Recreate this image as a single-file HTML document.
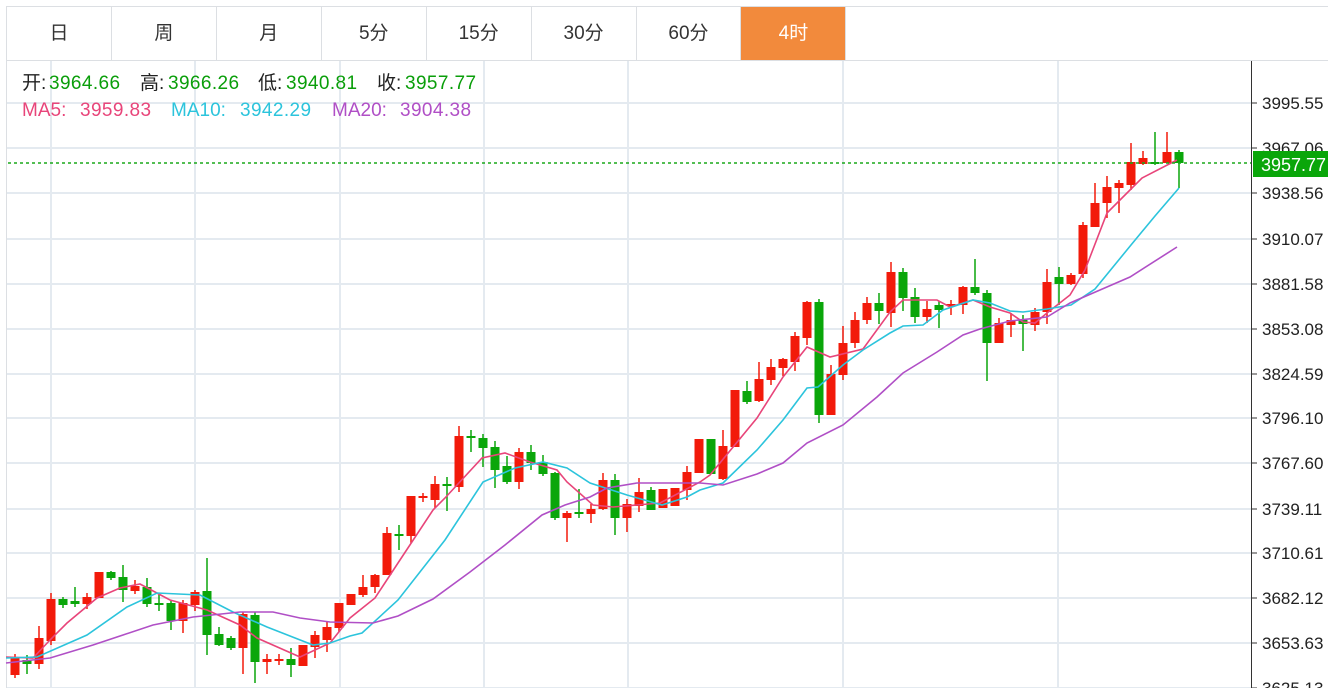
<!DOCTYPE html>
<html><head><meta charset="utf-8"><style>
*{margin:0;padding:0;box-sizing:border-box}
body{width:1328px;height:688px;overflow:hidden;background:#fff;font-family:"Liberation Sans","Noto Sans CJK SC",sans-serif;position:relative}
.tabs{position:absolute;left:6px;top:6px;height:55px;display:flex;border:1px solid #dcdfe3;border-right:none;width:1322px}
.tab{width:105px;height:53px;border-right:1px solid #dcdfe3;text-align:center;line-height:53px;font-size:19px;color:#333}
.tab.on{background:#f28a3c;color:#fff}
.i{position:absolute;font-size:19px;white-space:nowrap;line-height:22px}
.k{color:#222}.v{color:#0a9e0a}
svg{position:absolute;left:0;top:0}
</style></head><body>
<svg id="c" width="1328" height="688"></svg>
<div class="tabs"><div class="tab">日</div><div class="tab">周</div><div class="tab">月</div><div class="tab">5分</div><div class="tab">15分</div><div class="tab">30分</div><div class="tab">60分</div><div class="tab on">4时</div><div class="tab" style="border-right:none;width:482px"></div></div>
<div class="i k" style="left:22px;top:73px">开:</div><div class="i v" style="left:49px;top:73px;letter-spacing:0.4px">3964.66</div>
<div class="i k" style="left:140px;top:73px">高:</div><div class="i v" style="left:168px;top:73px;letter-spacing:0.4px">3966.26</div>
<div class="i k" style="left:258px;top:73px">低:</div><div class="i v" style="left:286px;top:73px;letter-spacing:0.4px">3940.81</div>
<div class="i k" style="left:377px;top:73px">收:</div><div class="i v" style="left:405px;top:73px;letter-spacing:0.4px">3957.77</div>
<div class="i" style="left:22px;top:100px;color:#e8457a">MA5:</div><div class="i" style="left:80px;top:100px;color:#e8457a;letter-spacing:0.4px">3959.83</div>
<div class="i" style="left:171px;top:100px;color:#2cc4dc">MA10:</div><div class="i" style="left:240px;top:100px;color:#2cc4dc;letter-spacing:0.4px">3942.29</div>
<div class="i" style="left:332px;top:100px;color:#b04fc6">MA20:</div><div class="i" style="left:400px;top:100px;color:#b04fc6;letter-spacing:0.4px">3904.38</div>
<script>
var s='';
var G='#e4eaf0';
[103,148,193,239,284,329,374,418,463,509,553,598,643,688].forEach(function(y){s+='<line x1="6" x2="1251" y1="'+y+'" y2="'+y+'" stroke="'+G+'" stroke-width="2"/>';});
[51,195,340,484,628,843,1058].forEach(function(x){s+='<line x1="'+x+'" x2="'+x+'" y1="60" y2="688" stroke="'+G+'" stroke-width="2"/>';});
s+='<line x1="6.5" x2="6.5" y1="60" y2="688" stroke="#dcdfe3"/>';
s+='<line x1="1251.5" x2="1251.5" y1="60" y2="688" stroke="#333"/>';
var labs=['3995.55','3967.06','3938.56','3910.07','3881.58','3853.08','3824.59','3796.10','3767.60','3739.11','3710.61','3682.12','3653.63','3625.13'];
[103,148,193,239,284,329,374,418,463,509,553,598,643,688].forEach(function(y,i){s+='<line x1="1251" x2="1257" y1="'+y+'" y2="'+y+'" stroke="#333"/><text x="1262" y="'+(y+6)+'" font-size="17" fill="#222" font-family="Liberation Sans,sans-serif">'+labs[i]+'</text>';});
var R='#f21a0a',Gr='#0aa60a';
var d=[[15,'r',658,675,654,678],[27,'g',660,664,655,674],[39,'r',638,664,626,669],[51,'r',599,641,593,645],[63,'g',599,605,597,608],[75,'g',601,604,587,607],[87,'r',597,604,593,609],[99,'r',572,598,572,598],[111,'g',572,578,571,580],[123,'g',577,590,565,602],[135,'r',586,591,580,594],[147,'g',587,604,578,607],[159,'g',603,605,594,611],[171,'g',603,621,601,630],[183,'r',603,621,600,633],[195,'r',592,605,590,611],[207,'g',591,635,558,655],[219,'g',634,645,627,646],[231,'g',638,648,636,650],[243,'r',614,648,612,674],[255,'g',615,662,612,683],[267,'r',659,662,654,674],[279,'r',659,661,654,665],[291,'g',659,665,648,677],[303,'r',645,666,645,666],[315,'r',635,647,631,658],[327,'r',627,640,621,652],[339,'r',603,628,603,632],[351,'r',594,605,594,605],[363,'r',587,595,575,597],[375,'r',575,587,574,593],[387,'r',533,575,527,575],[399,'g',534,536,525,550],[411,'r',496,536,496,543],[423,'r',496,498,493,502],[435,'r',484,500,476,508],[447,'g',484,486,477,511],[459,'r',436,487,426,492],[471,'g',436,438,430,452],[483,'g',438,448,434,467],[495,'g',447,470,441,488],[507,'g',466,482,456,484],[519,'r',452,482,448,489],[531,'g',452,463,445,470],[543,'g',462,474,455,476],[555,'g',473,518,472,520],[567,'r',513,518,511,542],[579,'g',512,514,489,518],[591,'r',509,514,504,523],[603,'r',480,509,473,510],[615,'g',480,518,474,535],[627,'r',504,518,499,532],[639,'r',492,506,478,512],[651,'g',490,510,487,510],[663,'r',489,508,489,508],[675,'r',488,506,488,506],[687,'r',472,490,466,500],[699,'r',439,473,439,473],[711,'g',439,474,439,474],[723,'r',446,479,430,480],[735,'r',390,447,390,447],[747,'g',391,402,381,404],[759,'r',379,401,362,402],[771,'r',367,380,359,385],[783,'r',359,368,358,376],[795,'r',336,362,332,371],[807,'r',302,338,301,345],[819,'g',302,415,299,423],[831,'r',374,415,365,415],[843,'r',343,375,326,380],[855,'r',320,343,312,348],[867,'r',303,320,297,324],[879,'g',303,311,293,324],[891,'r',272,313,262,327],[903,'g',272,298,268,311],[915,'g',297,317,288,323],[927,'r',309,317,301,323],[939,'g',305,310,301,328],[951,'r',304,306,300,315],[963,'r',287,305,286,314],[975,'g',287,293,259,295],[987,'g',293,343,290,381],[999,'r',323,343,318,343],[1011,'r',320,325,313,337],[1023,'g',320,324,315,351],[1035,'r',312,325,308,331],[1047,'r',282,312,269,324],[1059,'g',277,284,267,305],[1071,'r',275,284,273,285],[1083,'r',225,274,222,278],[1095,'r',203,227,183,227],[1107,'r',187,203,176,218],[1119,'r',183,188,180,213],[1131,'r',162,185,143,190],[1143,'r',158,164,151,165],[1155,'g',162,164,132,165],[1167,'r',152,163,132,163],[1179,'g',152,163,150,188]];
d.forEach(function(c){var col=c[1]=='r'?R:Gr;var h=Math.max(2,c[3]-c[2]);s+='<line x1="'+c[0]+'" x2="'+c[0]+'" y1="'+c[4]+'" y2="'+c[5]+'" stroke="'+col+'" stroke-width="1.5"/><rect x="'+(c[0]-4.5)+'" y="'+c[2]+'" width="9" height="'+h+'" fill="'+col+'"/>';});
function pl(p,c){s+='<polyline fill="none" stroke="'+c+'" stroke-width="1.6" points="'+p+'"/>';}
pl('6,657 33,658 50,640 67,623 97,598 120,588 140,584 170,600 207,610 240,625 257,638 300,657 330,643 350,618 375,598 398,563 433,510 445,498 482,458 505,453 530,462 557,470 567,482 593,505 613,507 660,503 700,482 710,475 757,418 783,377 807,347 830,357 863,349 890,312 903,300 937,300 950,307 973,300 990,307 1010,313 1023,322 1035,323 1047,313 1070,295 1085,270 1107,213 1130,190 1142,178 1177,160','#e8457a');
pl('6,658 37,657 87,635 127,607 157,593 200,595 233,612 267,627 313,645 330,643 350,636 362,633 398,600 445,540 483,482 515,468 543,462 567,468 590,483 627,495 662,505 687,497 700,490 723,483 757,450 783,420 807,388 818,387 843,365 863,350 890,333 903,326 923,325 943,310 973,300 990,303 1010,311 1023,312 1047,309 1071,305 1095,289 1131,245 1155,216 1179,188','#2cc4dc');
pl('6,663 50,658 93,645 153,625 193,617 240,612 273,612 300,618 330,622 373,623 398,616 433,599 470,572 505,545 542,515 565,505 590,497 607,488 637,483 700,483 723,485 757,474 783,463 807,443 843,425 877,397 903,373 937,352 963,335 980,329 1010,321 1047,317 1070,303 1100,290 1130,277 1177,247','#b04fc6');
s+='<line x1="8" x2="1251" y1="163" y2="163" stroke="#1aa81a" stroke-width="1.5" stroke-dasharray="3,3"/>';
s+='<rect x="1253" y="151" width="75" height="26" fill="#0aa60a"/><text x="1261" y="171" font-size="18" fill="#fff" font-family="Liberation Sans,sans-serif">3957.77</text>';
document.getElementById('c').innerHTML=s;
</script>
</body></html>
